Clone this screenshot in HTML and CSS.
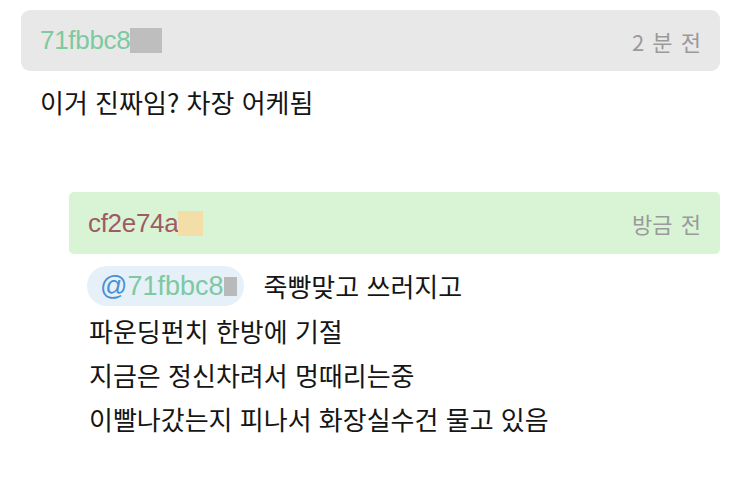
FILE: index.html
```html
<!DOCTYPE html>
<html lang="ko">
<head>
<meta charset="utf-8">
<link rel="stylesheet" href="styles.css">
</head>
<body>
<div class="thread">
  <div class="comment">
    <div class="head head-gray">
      <span class="uid uid-green">71fbbc8<span class="mask mask-gray"></span></span>
      <span class="time">2 분 전</span>
    </div>
    <p class="text main-text">이거 진짜임? 차장 어케됨</p>
  </div>
  <div class="comment reply">
    <div class="head head-green">
      <span class="uid uid-red">cf2e74a<span class="mask mask-beige"></span></span>
      <span class="time">방금 전</span>
    </div>
    <div class="reply-body">
      <div class="line first-line">
        <span class="mention"><span class="at">@</span><span class="uid-green">71fbbc8</span><span class="mask mask-small"></span></span>
        <span class="text">죽빵맞고 쓰러지고</span>
      </div>
      <div class="line text">파운딩펀치 한방에 기절</div>
      <div class="line text">지금은 정신차려서 멍때리는중</div>
      <div class="line text">이빨나갔는지 피나서 화장실수건 물고 있음</div>
    </div>
  </div>
</div>
</body>
</html>
```
FILE: styles.css
```css
* { box-sizing: border-box; }
html, body { margin: 0; padding: 0; background: #fff; }
body {
  font-family: "Noto Sans CJK KR", "Noto Sans", sans-serif;
  color: #151515;
}
.thread { padding: 10px 20px 0 21px; }
.head {
  display: flex;
  justify-content: space-between;
  align-items: center;
  height: 61px;
  padding: 0 19px 0 19px;
}
.head-gray { background: #e8e8e8; border-radius: 9px; }
.head-green { background: #d9f4d5; border-radius: 5px; height: 62px; }
.uid {
  font-family: "Liberation Sans", Arial, sans-serif;
  font-size: 26px;
  display: flex;
  align-items: center;
  letter-spacing: -0.3px;
}
.uid-green { color: #7dc9a0; }
.uid-red { color: #a05a64; }
.mask { display: inline-block; }
.mask-gray { width: 32px; height: 25px; background: #bebebe; }
.mask-beige { width: 25px; height: 25px; background: #f3dea8; }
.mask-small { width: 13px; height: 19px; background: #b9b9b9; }
.time {
  font-size: 22px;
  color: #9a9a9a;
  word-spacing: 2px;
}
.text { font-size: 26px; color: #151515; }
.main-text { margin: 13px 0 0 0; padding-left: 19px; line-height: 36px; }
.reply { margin: 72px 0 0 48px; }
.reply-body { padding: 12px 0 0 20px; }
.line { line-height: 44px; }
.first-line {
  display: flex;
  align-items: center;
  gap: 20px;
  height: 40px;
  margin-bottom: 3px;
}
.mention {
  display: flex;
  align-items: center;
  height: 40px;
  margin-left: -2px;
  padding: 0 7px 0 13px;
  border-radius: 20px;
  background: #e5f0f9;
  font-family: "Liberation Sans", Arial, sans-serif;
  font-size: 27px;
}
.at { color: #4a8fd6; }
.first-line .text { line-height: 40px; }
```
